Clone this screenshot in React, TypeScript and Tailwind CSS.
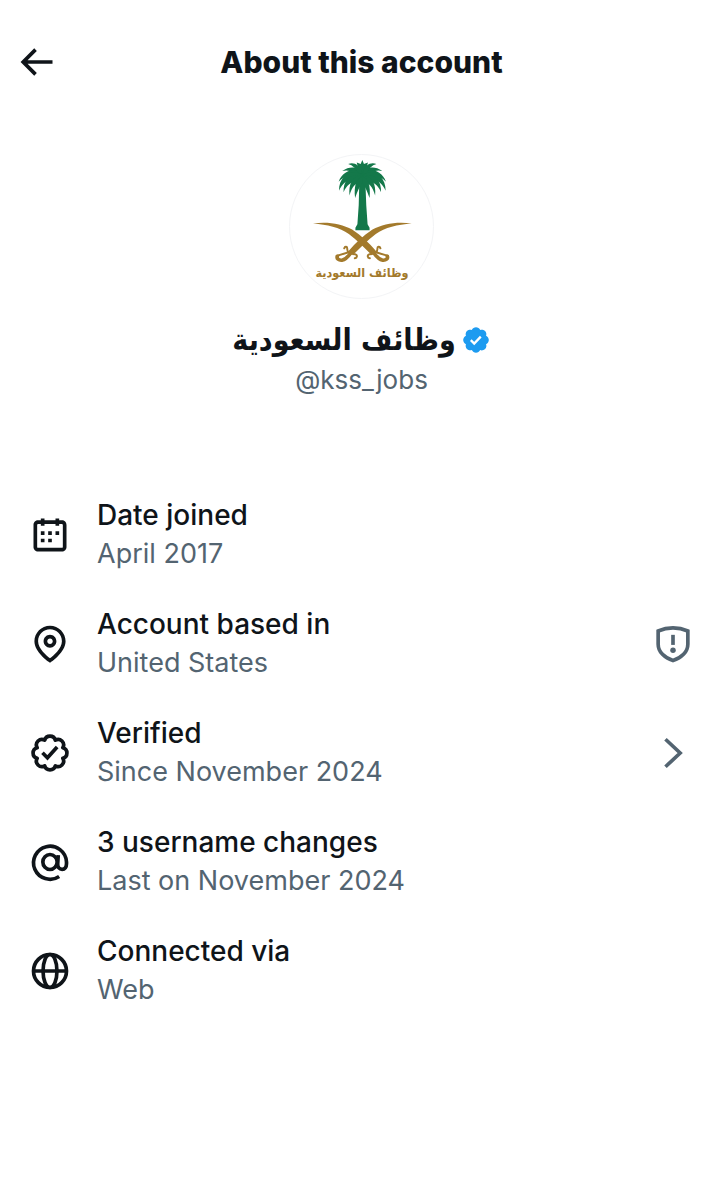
import type { ReactNode } from 'react';

type IconProps = { className?: string };

const ArrowIcon = ({ className }: IconProps) => (
  <svg viewBox="0 0 24 24" className={className} fill="currentColor" aria-hidden="true">
    <path d="M7.414 13l5.043 5.04-1.414 1.42L3.586 12l7.457-7.46 1.414 1.42L7.414 11H21v2H7.414z" />
  </svg>
);

const CalendarIcon = ({ className }: IconProps) => (
  <svg viewBox="0 0 24 24" className={className} fill="currentColor" aria-hidden="true">
    <path d="M7 4V3h2v1h6V3h2v1h1.5C19.89 4 21 5.12 21 6.5v12c0 1.38-1.11 2.5-2.5 2.5h-13C4.12 21 3 19.88 3 18.5v-12C3 5.12 4.12 4 5.5 4H7zm0 2H5.5c-.27 0-.5.22-.5.5v12c0 .28.23.5.5.5h13c.28 0 .5-.22.5-.5v-12c0-.28-.22-.5-.5-.5H17v1h-2V6H9v1H7V6zm0 6h2v-2H7v2zm0 4h2v-2H7v2zm4-4h2v-2h-2v2zm0 4h2v-2h-2v2zm4-4h2v-2h-2v2z" />
  </svg>
);

const LocationIcon = ({ className }: IconProps) => (
  <svg viewBox="0 0 24 24" className={className} fill="currentColor" aria-hidden="true">
    <path d="M12 7c-1.93 0-3.5 1.57-3.5 3.5S10.07 14 12 14s3.5-1.57 3.5-3.5S13.93 7 12 7zm0 5c-.827 0-1.5-.673-1.5-1.5S11.173 9 12 9s1.5.673 1.5 1.5S12.827 12 12 12zm0-10c-4.687 0-8.5 3.813-8.5 8.5 0 5.967 7.621 11.116 7.945 11.332l.555.37.555-.37c.324-.216 7.945-5.365 7.945-11.332C20.5 5.813 16.687 2 12 2zm0 17.77c-1.665-1.241-6.5-5.196-6.5-9.27C5.5 6.916 8.416 4 12 4s6.5 2.916 6.5 6.5c0 4.073-4.835 8.028-6.5 9.27z" />
  </svg>
);

const VerifiedOutlineIcon = ({ className }: IconProps) => (
  <svg viewBox="0 0 24 24" className={className} fill="none" stroke="currentColor" strokeWidth="2" aria-hidden="true">
    <path
      strokeLinejoin="round"
      d="M9.1 5A3 3 0 0 1 14.9 5A3 3 0 0 1 19 9.1A3 3 0 0 1 19 14.9A3 3 0 0 1 14.9 19A3 3 0 0 1 9.1 19A3 3 0 0 1 5 14.9A3 3 0 0 1 5 9.1A3 3 0 0 1 9.1 5Z"
    />
    <path d="M7.9 11.9l2.7 2.7 5.3-5.9" />
  </svg>
);

const AtIcon = ({ className }: IconProps) => (
  <svg viewBox="0 0 24 24" className={className} fill="none" stroke="currentColor" strokeWidth="2" aria-hidden="true">
    <path d="M17 19.9A9 9 0 1 1 21 12v1c0 1.8-.9 3-2.4 3s-2.5-1.2-2.4-2.9l.3-4.9" />
    <ellipse cx="12" cy="12" rx="3.9" ry="4.1" />
  </svg>
);

const GlobeIcon = ({ className }: IconProps) => (
  <svg viewBox="0 0 24 24" className={className} fill="none" stroke="currentColor" strokeWidth="2" aria-hidden="true">
    <circle cx="12" cy="12" r="9" />
    <ellipse cx="12" cy="12" rx="3.8" ry="9" />
    <path d="M3 12h18" />
  </svg>
);

const ShieldIcon = ({ className }: IconProps) => (
  <svg viewBox="0 0 24 24" className={className} fill="none" stroke="currentColor" strokeWidth="2" aria-hidden="true">
    <path d="M12 3.2c2.8 0 5.6.6 8.1 1.7v7.2c0 4.3-3.6 7.5-8.1 8.9-4.5-1.4-8.1-4.6-8.1-8.9V4.9C6.4 3.8 9.2 3.2 12 3.2z" />
    <path d="M12 7v5.500" />
    <circle cx="12" cy="15.4" r="1.5" fill="currentColor" stroke="none" />
  </svg>
);

const ChevronIcon = ({ className }: IconProps) => (
  <svg viewBox="0 0 24 24" className={className} fill="none" stroke="currentColor" strokeWidth="2" aria-hidden="true">
    <path d="M7.900 4.500l8 7.500-8 7.500" />
  </svg>
);

const VerifiedBadge = ({ className }: IconProps) => (
  <svg viewBox="0 0 22 22" className={className} role="img" aria-label="Verified account">
    <path
      fill="#1d9bf0"
      d="M20.396 11c-.018-.646-.215-1.275-.57-1.816-.354-.54-.852-.972-1.438-1.246.223-.607.27-1.264.14-1.897-.131-.634-.437-1.218-.882-1.687-.47-.445-1.053-.75-1.687-.882-.633-.13-1.29-.083-1.897.14-.273-.587-.704-1.086-1.245-1.44S11.647 1.62 11 1.604c-.646.017-1.273.213-1.813.568s-.969.854-1.24 1.44c-.608-.223-1.267-.272-1.902-.14-.635.13-1.22.436-1.69.882-.445.47-.749 1.055-.878 1.688-.13.633-.08 1.29.144 1.896-.587.274-1.087.705-1.443 1.245-.356.54-.555 1.17-.574 1.817.02.647.218 1.276.574 1.817.356.54.856.972 1.443 1.245-.224.606-.274 1.263-.144 1.896.13.634.433 1.218.877 1.688.47.443 1.054.747 1.687.878.633.132 1.29.084 1.897-.136.274.586.705 1.084 1.246 1.439.54.354 1.17.551 1.816.569.647-.016 1.276-.213 1.817-.567s.972-.854 1.245-1.44c.604.239 1.266.296 1.903.164.636-.132 1.22-.447 1.68-.907.46-.46.776-1.044.908-1.681s.075-1.299-.165-1.903c.586-.274 1.084-.705 1.439-1.246.354-.54.551-1.17.569-1.816z"
    />
    <path d="M7.2 11.1l2.5 2.5 4.8-5.1" fill="none" stroke="#fff" strokeWidth="1.7" />
  </svg>
);

// Fronds on one side of the crown
const Fronds = () => (
  <g>
    <path d="M246 84C236 64 212 58 186 76C204 70 222 78 236 92Z" />
    <path d="M246 88C232 62 190 70 175 108C192 88 216 86 236 98Z" />
    <path d="M246 80C238 56 222 48 204 54C218 58 228 68 236 84Z" />
    <path d="M246 90C222 66 176 84 176 136C188 108 212 94 238 104Z" />
    <path d="M246 92C218 78 188 98 190 140C200 116 220 102 240 108Z" />
    <path d="M246 94C222 86 204 110 208 150C216 122 228 112 242 110Z" />
    <path d="M248 94C232 92 220 118 225 158C232 136 240 122 246 112Z" />
  </g>
);

const Sword = () => (
  <g>
    <path
      fill="#a37a2c"
      d="M97 235C140 229 184 235 216 254C244 272 268 296 288 318L274 330C254 310 232 286 206 267C178 247 140 238 97 235Z"
    />
    <path
      fill="none"
      stroke="#a37a2c"
      strokeWidth="11"
      strokeLinecap="round"
      d="M280 322C288 334 298 345 309 347C319 348 326 342 323 335"
    />
    <path
      fill="none"
      stroke="#a37a2c"
      strokeWidth="6"
      strokeLinecap="round"
      d="M270 341C262 340 261 331 269 329C284 329 293 322 293 313C292 305 300 304 302 311M286 322L325 334"
    />
  </g>
);

// Palm tree above two crossed swords, with the account name below
const AccountLogo = ({ className }: IconProps) => (
  <svg viewBox="27 27 435 435" className={className} role="img" aria-label="وظائف السعودية">
    <g fill="#14784a">
      <path d="M238 100L256 100L259 180L263 238L269 248L269 256L226 256L226 248L232 238L236 180Z" />
      <path d="M247 42L252 54L264 50L260 66L270 86L254 108L240 108L224 86L234 66L230 50L242 54Z" />
      <Fronds />
      <g transform="matrix(-1 0 0 1 494 0)">
        <Fronds />
      </g>
    </g>
    <Sword />
    <g transform="matrix(-1 0 0 1 494 0)">
      <Sword />
    </g>
    <text
      x="246"
      y="397"
      textAnchor="middle"
      direction="rtl"
      fill="#a37a2c"
      className="font-['DejaVu_Sans_Condensed','DejaVu_Sans',sans-serif] text-[38px] font-bold"
    >
      وظائف السعودية
    </text>
  </svg>
);

type Detail = {
  title: string;
  value: string;
  icon: ReactNode;
  action?: { label: string; icon: ReactNode };
};

const details: Detail[] = [
  {
    title: 'Date joined',
    value: 'April 2017',
    icon: <CalendarIcon className="size-11" />,
  },
  {
    title: 'Account based in',
    value: 'United States',
    icon: <LocationIcon className="size-11" />,
    action: {
      label: 'About this location',
      icon: <ShieldIcon className="size-11" />,
    },
  },
  {
    title: 'Verified',
    value: 'Since November 2024',
    icon: <VerifiedOutlineIcon className="size-11" />,
    action: {
      label: 'Verification details',
      icon: <ChevronIcon className="size-11" />,
    },
  },
  {
    title: '3 username changes',
    value: 'Last on November 2024',
    icon: <AtIcon className="size-11" />,
  },
  {
    title: 'Connected via',
    value: 'Web',
    icon: <GlobeIcon className="size-11" />,
  },
];

const DetailRow = ({ title, value, icon, action }: Detail) => (
  <li className="flex items-center">
    <span className="shrink-0">{icon}</span>
    <div className="ml-[25px] flex-1">
      <h3 className="text-[28px] leading-[38px] font-medium">{title}</h3>
      <p className="text-[27px] leading-[39px] text-[#536471]">{value}</p>
    </div>
    {action && (
      <button type="button" className="shrink-0 text-[#536471]" aria-label={action.label}>
        {action.icon}
      </button>
    )}
  </li>
);

const App = () => (
  <div className="min-h-screen bg-white font-[Inter,sans-serif] text-[#0f1419]">
    <header className="grid h-[124px] grid-cols-[44px_1fr_44px] items-center px-[14px]">
      <button type="button" aria-label="Back">
        <ArrowIcon className="size-11" />
      </button>
      <h1 className="text-center text-[30px] leading-9 font-extrabold">About this account</h1>
    </header>

    <main>
      <section className="flex flex-col items-center pt-[30px]">
        <div className="size-[145px] overflow-hidden rounded-full border border-gray-100">
          <AccountLogo className="size-full" />
        </div>
        <div className="mt-5 flex items-center gap-[5px]">
          <h2
            dir="rtl"
            lang="ar"
            className="font-['DejaVu_Sans_Condensed','DejaVu_Sans',sans-serif] text-[30px] leading-[42px] font-bold"
          >
            وظائف السعودية
          </h2>
          <VerifiedBadge className="size-[30px]" />
        </div>
        <p className="text-[26px] leading-[38px] text-[#536471]">@kss_jobs</p>
      </section>

      <ul className="flex flex-col gap-8 px-7 pt-[97px] pb-12">
        {details.map((detail) => (
          <DetailRow key={detail.title} {...detail} />
        ))}
      </ul>
    </main>
  </div>
);

export default App;
